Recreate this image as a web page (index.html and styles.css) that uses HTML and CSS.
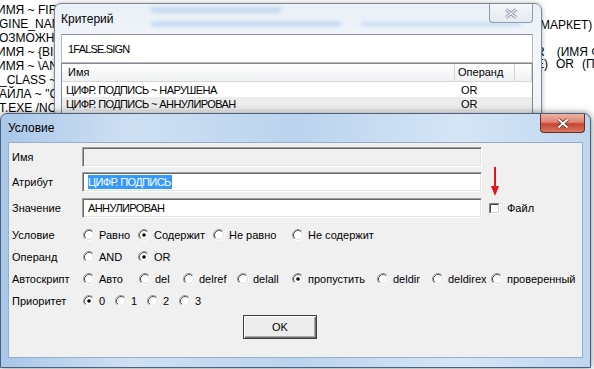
FILE: index.html
```html
<!DOCTYPE html>
<html lang="ru">
<head>
<meta charset="utf-8">
<title>Условие</title>
<link rel="stylesheet" href="styles.css">
</head>
<body>
<div class="desk">
  <div class="bg-left">
    <div class="bl cut-a">ИМЯ ~ FIREF</div>
    <div class="bl cut-b">GINE_NAME</div>
    <div class="bl cut-b">ОЗМОЖНО ]</div>
    <div class="bl cut-a">ИМЯ ~ {BIND</div>
    <div class="bl cut-a">ИМЯ ~ \ANYR</div>
    <div class="bl">_CLASS ~</div>
    <div class="bl cut-b">АЙЛА ~ "C</div>
    <div class="bl cut-b">Т.EXE /NOC</div>
  </div>
  <div class="bg-right">
    <div class="br r1"><span>МАРКЕТ)</span></div>
    <div class="br r2"><span>R</span><span>(ИМЯ ФА</span></div>
    <div class="br r3"><span>E)</span><span>OR</span><span>(ПО</span></div>
  </div>
</div>

<section class="win krit">
  <header class="tbar">
    <div class="haze h1"></div>
    <div class="haze h2"></div>
    <div class="haze h3"></div>
    <span class="ttl">Критерий</span>
    <span class="x-off">
      <svg width="14" height="11" viewBox="0 0 14 11"><path d="M2 1.5 L12 9.5 M12 1.5 L2 9.5" stroke="#8a96a6" stroke-width="3.2" fill="none"/><path d="M2 1.5 L12 9.5 M12 1.5 L2 9.5" stroke="#f2f5f9" stroke-width="1.4" fill="none"/></svg>
    </span>
  </header>
  <div class="client kclient">
    <div class="edit1 caps">1FALSE.SIGN</div>
    <div class="list">
      <div class="lhead"><span class="c1">Имя</span><span class="c2">Операнд</span><span class="c3"></span></div>
      <div class="lrow first"><span class="c1 caps">ЦИФР. ПОДПИСЬ ~ НАРУШЕНА</span><span class="c2">OR</span><span class="c3"></span></div>
      <div class="lrow alt"><span class="c1 caps">ЦИФР. ПОДПИСЬ ~ АННУЛИРОВАН</span><span class="c2">OR</span><span class="c3"></span></div>
    </div>
  </div>
</section>

<section class="win cond">
  <header class="tbar">
    <span class="ttl">Условие</span>
    <span class="x-on">
      <svg width="14" height="11" viewBox="0 0 14 11"><path d="M2.5 1.5 L11.5 9.5 M11.5 1.5 L2.5 9.5" stroke="#5a2019" stroke-width="3.6" fill="none"/><path d="M2.5 1.5 L11.5 9.5 M11.5 1.5 L2.5 9.5" stroke="#ffffff" stroke-width="2" fill="none"/></svg>
    </span>
  </header>
  <div class="client cclient">
    <div class="form">
      <div class="frow">
        <span class="lab">Имя</span>
        <div class="field off"></div>
      </div>
      <div class="frow f2">
        <span class="lab">Атрибут</span>
        <div class="field"><span class="sel caps">ЦИФР. ПОДПИСЬ</span></div>
      </div>
      <div class="frow f3">
        <span class="lab">Значение</span>
        <div class="field"><span class="caps">АННУЛИРОВАН</span></div>
        <span class="chk">
          <svg width="11" height="11" viewBox="0 0 11 11"><rect x="0" y="0" width="11" height="11" fill="#fff"/><path d="M0.5 10.5 V0.5 H10.5" stroke="#808080" fill="none"/><path d="M1.5 9.5 V1.5 H9.5" stroke="#404040" fill="none"/><path d="M10.5 0.5 V10.5 H0.5" stroke="#ffffff" fill="none"/><path d="M9.5 1.5 V9.5 H1.5" stroke="#d4d0c8" fill="none"/></svg>
          <span>Файл</span>
        </span>
      </div>

      <div class="frow rrow r-first">
        <span class="lab">Условие</span>
        <span class="opt w55"><svg class="rb" viewBox="0 0 12 12"><use href="#radio"/></svg>Равно</span>
        <span class="opt w75"><svg class="rb" viewBox="0 0 12 12"><use href="#radio"/><circle cx="6" cy="6" r="1.8" fill="#000"/></svg>Содержит</span>
        <span class="opt w79"><svg class="rb" viewBox="0 0 12 12"><use href="#radio"/></svg>Не равно</span>
        <span class="opt"><svg class="rb" viewBox="0 0 12 12"><use href="#radio"/></svg>Не содержит</span>
      </div>
      <div class="frow rrow">
        <span class="lab">Операнд</span>
        <span class="opt w55"><svg class="rb" viewBox="0 0 12 12"><use href="#radio"/></svg>AND</span>
        <span class="opt"><svg class="rb" viewBox="0 0 12 12"><use href="#radio"/><circle cx="6" cy="6" r="1.8" fill="#000"/></svg>OR</span>
      </div>
      <div class="frow rrow">
        <span class="lab">Автоскрипт</span>
        <span class="opt w56"><svg class="rb" viewBox="0 0 12 12"><use href="#radio"/></svg>Авто</span>
        <span class="opt w44"><svg class="rb" viewBox="0 0 12 12"><use href="#radio"/></svg>del</span>
        <span class="opt w54"><svg class="rb" viewBox="0 0 12 12"><use href="#radio"/></svg>delref</span>
        <span class="opt w55"><svg class="rb" viewBox="0 0 12 12"><use href="#radio"/></svg>delall</span>
        <span class="opt w85"><svg class="rb" viewBox="0 0 12 12"><use href="#radio"/><circle cx="6" cy="6" r="1.8" fill="#000"/></svg>пропустить</span>
        <span class="opt w55"><svg class="rb" viewBox="0 0 12 12"><use href="#radio"/></svg>deldir</span>
        <span class="opt w59"><svg class="rb" viewBox="0 0 12 12"><use href="#radio"/></svg>deldirex</span>
        <span class="opt"><svg class="rb" viewBox="0 0 12 12"><use href="#radio"/></svg>проверенный</span>
      </div>
      <div class="frow rrow">
        <span class="lab">Приоритет</span>
        <span class="opt w32"><svg class="rb" viewBox="0 0 12 12"><use href="#radio"/><circle cx="6" cy="6" r="1.8" fill="#000"/></svg>0</span>
        <span class="opt w32"><svg class="rb" viewBox="0 0 12 12"><use href="#radio"/></svg>1</span>
        <span class="opt w32"><svg class="rb" viewBox="0 0 12 12"><use href="#radio"/></svg>2</span>
        <span class="opt"><svg class="rb" viewBox="0 0 12 12"><use href="#radio"/></svg>3</span>
      </div>
      <div class="okbar">
        <span class="ok">OK</span>
      </div>
    </div>
  </div>
  <svg class="arrow" width="10" height="30" viewBox="0 0 10 30"><path d="M5 0 V21" stroke="#e8141c" stroke-width="2"/><polygon points="1,19 9,19 5,29" fill="#e8141c"/></svg>
</section>

<svg width="0" height="0" class="defs">
  <defs>
    <g id="radio">
      <circle cx="6" cy="6" r="5" fill="#ffffff"/>
      <path d="M9.89 2.11 A5.5 5.5 0 0 0 2.11 9.89" stroke="#9a9a9a" fill="none"/>
      <path d="M9.18 2.82 A4.5 4.5 0 0 0 2.82 9.18" stroke="#555555" fill="none"/>
      <path d="M9.89 2.11 A5.5 5.5 0 0 1 2.11 9.89" stroke="#ffffff" fill="none"/>
      <path d="M9.18 2.82 A4.5 4.5 0 0 1 2.82 9.18" stroke="#dedbd4" fill="none"/>
    </g>
  </defs>
</svg>
</body>
</html>
```
FILE: styles.css
```css
* { box-sizing: border-box; }
html, body { margin: 0; padding: 0; }
body {
  width: 594px;
  height: 369px;
  overflow: hidden;
  position: relative;
  background: #fff;
  font-family: "Liberation Sans", Arial, sans-serif;
  font-size: 11px;
  color: #000;
}
.defs { position: absolute; }
.caps { letter-spacing: -0.6px; }

/* background window */
.desk {
  display: grid;
  grid-template-columns: 60px 476px 58px;
  height: 100%;
  font-size: 12px;
}
.bg-left {
  padding-top: 3px;
  line-height: 14px;
  white-space: nowrap;
  overflow: hidden;
}
.bl.cut-a { margin-left: -3px; }
.bl.cut-b { margin-left: -1px; }
.bg-right {
  grid-column: 3;
  padding-top: 19px;
  line-height: 12px;
  white-space: nowrap;
  overflow: hidden;
}
.br { display: flex; gap: 9px; }
.br.r1 { padding-left: 4px; }
.br.r2 { margin-top: 15px; gap: 12px; }
.br.r3 { gap: 8px; }

/* windows */
.win {
  position: absolute;
  display: flex;
  flex-direction: column;
}
.tbar {
  flex: none;
  position: relative;
  display: flex;
  align-items: center;
}
.ttl { font-size: 12px; position: relative; }

.krit {
  left: 54px;
  top: 3px;
  width: 488px;
  height: 132px;
  border: 1px solid #7d8897;
  border-radius: 7px 7px 0 0;
  padding: 0 8px 0 6px;
  background: linear-gradient(180deg, #e9f0f7 0%, #f5f8fb 45%, #edf2f7 100%);
  box-shadow: 0 0 5px rgba(0, 0, 0, 0.3);
}
.krit .tbar { height: 30px; }
.haze {
  position: absolute;
  height: 4px;
  background: #9fc2ec;
  filter: blur(2px);
  opacity: 0.7;
}
.haze.h1 { left: 90px; top: 4px; width: 130px; }
.haze.h2 { left: 90px; top: 18px; width: 190px; }
.haze.h3 { left: 300px; top: 18px; width: 160px; opacity: 0.5; }
.x-off {
  position: absolute;
  right: 0;
  top: 0;
  width: 44px;
  height: 19px;
  border: 1px solid #8f9cad;
  border-top: none;
  border-radius: 0 0 4px 4px;
  background: linear-gradient(#f5f7fa, #e4eaf1);
  display: flex;
  align-items: center;
  justify-content: center;
}
.kclient {
  flex: 1;
  background: #fff;
  display: flex;
  flex-direction: column;
}
.edit1 {
  height: 29px;
  border: 1px solid #b5b9c0;
  border-top-color: #8e9196;
  display: flex;
  align-items: center;
  padding-left: 6px;
  letter-spacing: -0.8px;
}
.list {
  flex: 1;
  border: 1px solid #828790;
}
.lhead {
  display: flex;
  height: 18px;
  background: linear-gradient(#ffffff, #f0f1f3);
  border-bottom: 1px solid #d5d5d5;
}
.lhead span {
  border-right: 1px solid #d5d5d5;
  line-height: 17px;
  padding-left: 3px;
}
.lhead .c1 { padding-left: 6px; }
.c1 { width: 393px; flex: none; }
.c2 { width: 60px; flex: none; }
.c3 { flex: 1; }
.lrow {
  display: flex;
  height: 14px;
  line-height: 14px;
}
.lrow.first { margin-top: 1px; }
.lrow.alt { background: #ececec; }
.lrow .c1 { padding-left: 4px; }
.lrow .c2 { padding-left: 6px; }

/* active dialog */
.cond {
  left: 0;
  top: 113px;
  width: 591px;
  height: 255px;
  border: 1px solid #47617f;
  border-radius: 7px 7px 0 0;
  padding: 0 7px 9px 7px;
  background: linear-gradient(90deg, #a9c7e9 0%, #cfe0f3 22%, #bad3ee 50%, #d6e5f6 78%, #bfd6ef 100%);
  box-shadow: 0 0 7px rgba(0, 0, 0, 0.5);
}
.cond .tbar { height: 28px; }
.x-on {
  position: absolute;
  right: -2px;
  top: 0;
  width: 45px;
  height: 19px;
  border: 1px solid #6a2c25;
  border-top: none;
  border-radius: 0 0 4px 4px;
  background: linear-gradient(#edb3a5 0%, #de8572 45%, #c7432f 55%, #d77a63 100%);
  display: flex;
  align-items: center;
  justify-content: center;
}
.cclient {
  flex: 1;
  background: #f0f0f0;
  border: 1px solid #97aecb;
}
.form {
  padding: 4px 0 0 3px;
  display: flex;
  flex-direction: column;
}
.frow {
  display: flex;
  align-items: center;
  height: 20px;
}
.frow.f2 { margin-top: 5px; }
.frow.f3 { margin-top: 6px; }
.lab { width: 70px; flex: none; }
.field {
  width: 400px;
  height: 20px;
  background: #fff;
  border-top: 1px solid #a0a0a0;
  border-left: 1px solid #a0a0a0;
  border-right: 1px solid #ffffff;
  border-bottom: 1px solid #ffffff;
  box-shadow: inset 1px 1px 0 #696969, inset -1px -1px 0 #e3e3e3;
  display: flex;
  align-items: center;
  padding-left: 5px;
}
.field.off { background: #f0f0f0; }
.sel {
  background: #3399ff;
  color: #fff;
  line-height: 14px;
  padding-right: 1px;
}
.chk {
  display: flex;
  align-items: center;
  gap: 7px;
  margin-left: 7px;
}
.rrow { height: 22px; }
.rrow.r-first { margin-top: 6px; }
.opt {
  display: flex;
  align-items: center;
  gap: 4px;
  white-space: nowrap;
  flex: none;
}
.rb { width: 12px; height: 12px; margin-left: 1px; flex: none; }
.w32 { width: 32px; }
.w44 { width: 44px; }
.w54 { width: 54px; }
.w55 { width: 55px; }
.w56 { width: 56px; }
.w59 { width: 59px; }
.w75 { width: 75px; }
.w79 { width: 79px; }
.w85 { width: 85px; }
.okbar {
  margin-top: 3px;
  padding-left: 231px;
}
.ok {
  display: flex;
  align-items: center;
  justify-content: center;
  width: 74px;
  height: 24px;
  background: #ededed;
  border: 1px solid #3c3c3c;
  box-shadow: inset 1px 1px 0 #ffffff, inset -1px -1px 0 #707070, inset -2px -2px 0 #a8a8a8;
}
.arrow {
  position: absolute;
  left: 489px;
  top: 53px;
}
```
